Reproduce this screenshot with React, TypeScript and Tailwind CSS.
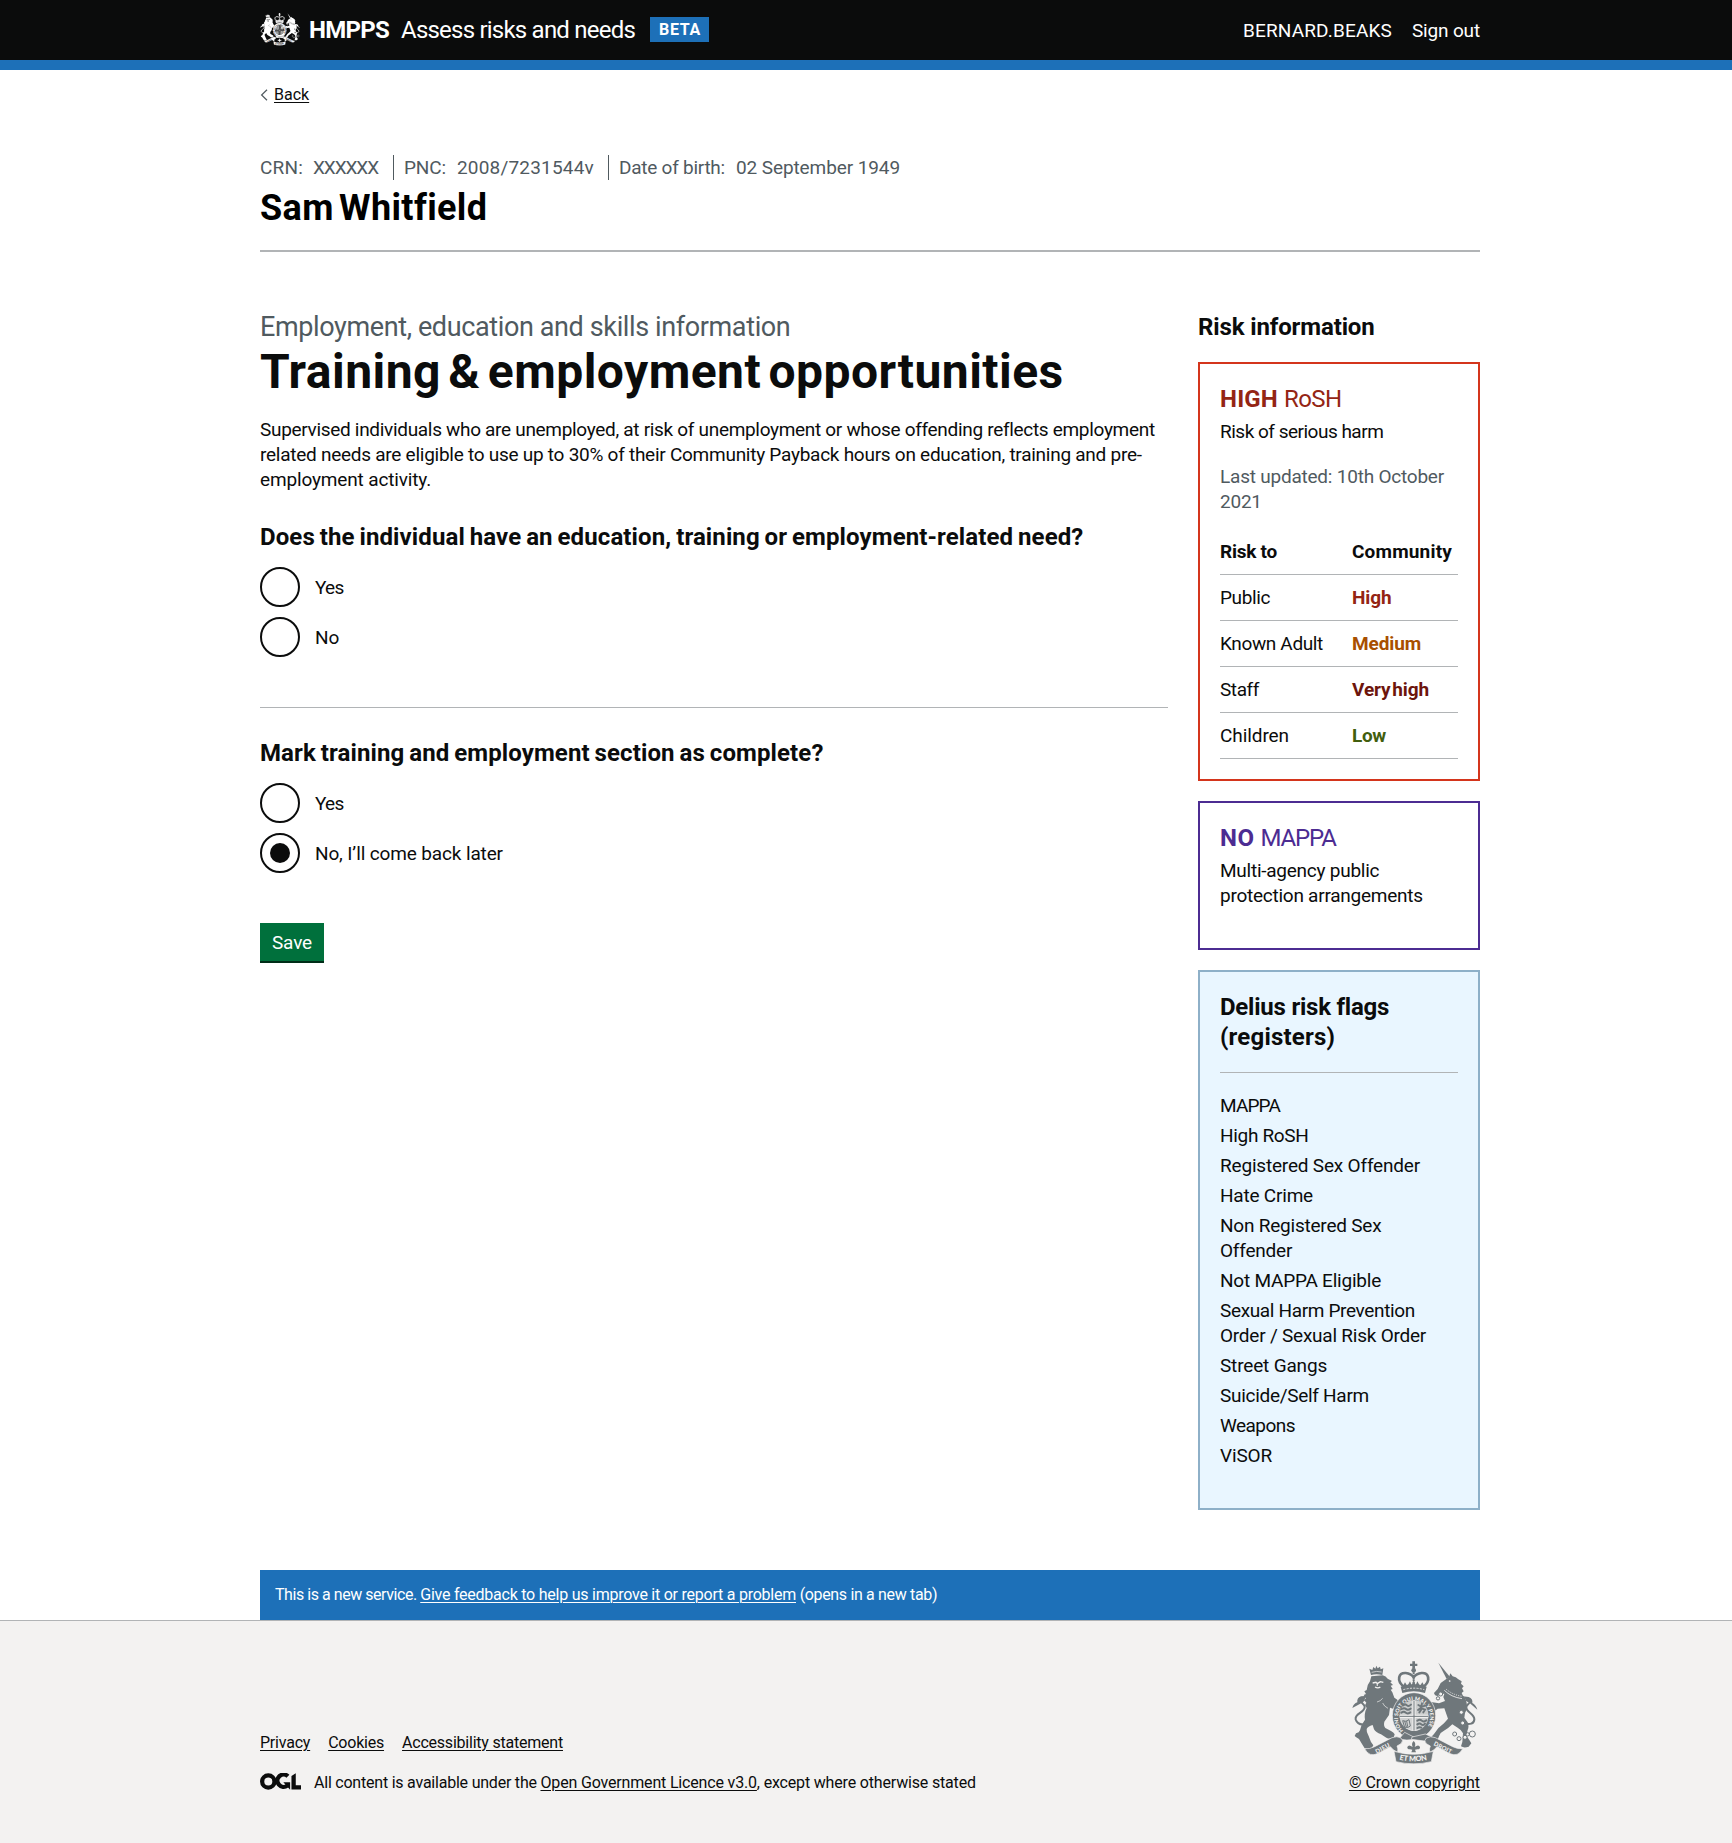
import type { ReactNode } from "react";

type CrestProps = { className: string; ink: string; paper: string; idPrefix: string };

/** Royal arms: lion, garter with crown, unicorn and the motto ribbon. */
function RoyalArms({ className, ink, paper, idPrefix }: CrestProps) {
  const ring = `${idPrefix}-garter`;
  const scroll = `${idPrefix}-scroll`;
  return (
    <svg viewBox="20 16 378 310" className={className} fill={ink} aria-hidden="true">
      {/* crown */}
      <path d="M201 19h8v7h7v7h-7v8h-8v-8h-7v-7h7z" />
      <circle cx="205" cy="46" r="7" />
      <path
        d="M176 96C152 76 160 53 181 54c12 1 20 7 24 13 4-6 12-12 24-13 21-1 29 22 5 42"
        fill="none"
        stroke={ink}
        strokeWidth="8"
      />
      <path d="M205 52v40" stroke={ink} strokeWidth="6" strokeDasharray="5 2" />
      <path d="M171 96l8-14 7 11 8-14 5 12 6-17 6 17 5-12 8 14 7-11 8 14q-34-11-68 0z" />
      <path d="M166 95q38-14 78 0l-5 19q-34-11-68 0z" />
      <path d="M174 104q31-9 63 0" fill="none" stroke={paper} strokeWidth="2.5" strokeDasharray="6 4" />

      {/* lion */}
      <path d="M77 60l-5-19 9 4 3-9 6 5 3-9 4 8 7-5 2 8 8-3-3 20q-18-5-34 0z" />
      <path d="M79 52q15-5 30-1" fill="none" stroke={paper} strokeWidth="2" />
      <path d="M78 64l34-3q10 3 15 10l13 7-5 4 8 8-7 2 6 10-6 2 5 8 6 16q9 4 14 12l-3 13-9-4-1 14-14-5-3 22-14 20q-3 12 3 19l17 9q8 4 11 10l-3 10q-12 5-22 0l-16-10q-16-6-21-15l-4-13q-15 4-18 12-1 10 5 19l8 20 7 10-5 9q-12 5-21 0l-8-13-9-15q-8-5-13-9l4-8q10-2 12-9 3-18 15-32-3-19 5-35l-5-8 4-8-7-8 6-5-7-10 7-3-5-8 7-4q2-17 10-26z" />
      <path d="M82 84l10-2 4 4 9-6 9 2M89 96q9 5 16 0M96 86v6" fill="none" stroke={paper} strokeWidth="4" />
      <path d="M112 130q-7 9-17 11M128 160q-12-6-16-16" fill="none" stroke={paper} strokeWidth="2" />
      <path
        d="M66 206q-28 8-35-13c-4-18 29-20 27-38-1-8-9-9-11-16"
        fill="none"
        stroke={ink}
        strokeWidth="6"
      />
      <path d="M49 144l-28 15q4-14 15-17-2-13 11-18l24-2q-15 5-13 15z" />

      {/* unicorn */}
      <path d="M279 23l35 43-10 6z" />
      <path d="M303 72l8-5 4-12 7 9q10 1 17 9l10 6-2 7 8 8-5 6 5 9-6 5 3 7q10 9 12 23 3 16-5 30l-2 14 10 14q5 13 0 23l-4 17 9 13 6 10-8 10q-14 5-23-1l4-13 2-26q-5-11-16-17l-16-10q-12 12-23 18l-12 8q-5 8-9 20l-12 2-8-9 9-10q11-19 30-32l12-14-11-31-20 1-14 11q-3 8 3 13l-8 6-10-9 2-13 14-14-11-2q-7 7-14 3l-3-10 9-9 12 4 24 4 18-7-5-12 3-10-10 1-10 6q-9 0-11-9l11-12 9-18z" />
      <path d="M297 106q20 20 53 25" fill="none" stroke={paper} strokeWidth="2.5" />
      <path d="M302 102q20 18 49 22" fill="none" stroke={paper} strokeWidth="3" strokeDasharray="3 4" />
      <circle cx="313" cy="78" r="2.6" fill={paper} />
      <path
        d="M352 205q34 8 35-12c0-18-25-20-24-37 1-8 9-10 12-16"
        fill="none"
        stroke={ink}
        strokeWidth="6"
      />
      <path d="M372 143l24 21q-5-15-15-20 2-13-11-18l-23-3q14 5 15 15z" />
      <g fill={paper} stroke={ink} strokeWidth="3">
        <circle cx="286" cy="117" r="6" />
        <circle cx="278" cy="130" r="5" />
        <circle cx="348" cy="172" r="6" />
        <circle cx="352" cy="204" r="6" />
        <circle cx="328" cy="237" r="6" />
        <circle cx="341" cy="251" r="6" />
        <circle cx="359" cy="247" r="6" />
        <circle cx="367" cy="238" r="5" />
        <circle cx="381" cy="237" r="9" />
      </g>

      {/* garter and shield */}
      <ellipse cx="206" cy="182" rx="65" ry="69" stroke={paper} strokeWidth="2" />
      <ellipse cx="206" cy="182" rx="43" ry="46" fill={paper} />
      <defs>
        <path id={ring} d="M174 227A48 52 0 1 1 238 227" />
        <path id={scroll} d="M162 314q43 10 86 0" />
      </defs>
      <text fill={paper} fontSize="16" fontWeight="900" fontFamily="Lato, sans-serif">
        <textPath href={`#${ring}`} textLength="226">
          HONI SOIT QUI MAL Y PENSE
        </textPath>
      </text>
      <path d="M166 153q6-10 16-14l20-3v43h-39z" opacity=".3" />
      <path d="M210 136q25 2 35 20l4 23h-39z" opacity=".3" />
      <path d="M163 188h39v38q-32-5-39-38z" opacity=".25" />
      <path d="M210 188h39q-4 33-39 38z" opacity=".3" />
      <g fill="none" stroke={ink} strokeWidth="6" strokeLinecap="round">
        <path d="M174 151q6-5 11 0t12-2M169 162q8-5 13 0t14-1M168 173q8-5 13 0t14-1" />
        <path d="M216 197q8-5 13 0t14-1M216 208q7-5 12 0t11-2M216 219q6-4 12-1" />
        <path d="M219 150l10 6 10-4M230 146l-4 13-8 6M227 160l12 4-5 8M222 172l5-7" />
      </g>
      <path
        d="M172 197l6 20q12 2 17-4l-4-19q-9 8-19 3zM178 198l5 18M184 198l3 17"
        fill="none"
        stroke={ink}
        strokeWidth="3"
      />
      <path d="M206 138v89M163 184h86" stroke={paper} strokeWidth="8" />
      <path d="M206 138v89M163 184h86" stroke={ink} strokeWidth="3" />
      <path d="M178 232l-17 20q22 6 48 1l-2-6z" stroke={paper} strokeWidth="2" />
      <path d="M200 246l40-9 22 10-18 12-46-6z" stroke={paper} strokeWidth="2" />

      {/* motto ribbon */}
      <path d="M58 281q14 2 30-6l52-27q15-6 27 1 9 8 0 17l-12 7q4 8 2 19-14-6-22-17l-36 20q-28 13-41-14z" stroke={paper} strokeWidth="2" />
      <path d="M352 281q-14 2-30-6l-52-27q-15-6-27 1-9 8 0 17l12 7q-4 8-2 19 14-6 22-17l36 20q28 13 41-14z" stroke={paper} strokeWidth="2" />
      <path d="M146 289q58 18 118 0l-6 31q-53 13-106 0z" stroke={paper} strokeWidth="2" />
      <g fill={paper} fontWeight="900" fontFamily="Lato, sans-serif">
        <text fontSize="18" transform="translate(94 296) rotate(-28)" textLength="46">
          DIEU
        </text>
        <text fontSize="18" transform="translate(264 270) rotate(27)" textLength="58">
          DROIT
        </text>
        <text fontSize="22">
          <textPath href={`#${scroll}`} textLength="84">
            ET MON
          </textPath>
        </text>
      </g>
      <path d="M205 258q8 8 3 18 12-9 16 0 1 7-8 7l-7 1 3 8h-14l3-8-7-1q-9 0-8-7 4-9 16 0-5-10 3-18z" />
    </svg>
  );
}

function OglLogo() {
  return (
    <svg viewBox="0 0 483.2 195.7" className="h-[17px] w-[41px] shrink-0" fill="none" stroke="#0b0c0c" strokeWidth="50" aria-hidden="true">
      <circle cx="97.8" cy="97.8" r="72.5" />
      <path d="M329 36A72.5 72.5 0 1 0 322 146" />
      <path d="M275 107H355V196L275 107Z" fill="#0b0c0c" stroke="none" />
      <path d="M370.8 32.3L421.5 0V142.8H483.2V193.5H370.8Z" fill="#0b0c0c" stroke="none" />
    </svg>
  );
}

function Radio({ checked = false, children }: { checked?: boolean; children: ReactNode }) {
  return (
    <label className="flex h-10 items-center gap-[15px]">
      <span className="flex size-10 items-center justify-center rounded-full border-2 border-[#0b0c0c] bg-white">
        {checked && <span className="size-5 rounded-full bg-[#0b0c0c]" />}
      </span>
      {children}
    </label>
  );
}

const risks = [
  { who: <span className="tracking-[-0.39px]">Public</span>, level: <span className="tracking-[-0.11px] text-[#942514]">High</span> },
  { who: <span className="tracking-[-0.36px]">Known Adult</span>, level: <span className="tracking-[-0.12px] text-[#a84f00]">Medium</span> },
  { who: <span className="tracking-[-0.41px]">Staff</span>, level: <span className="tracking-[-0.1px] [word-spacing:-3px] text-[#6d150c]">Very high</span> },
  { who: <span className="tracking-[-0.08px]">Children</span>, level: <span className="tracking-[-0.32px] text-[#425e0e]">Low</span> },
];

const flags = [
  <span className="tracking-[-0.85px]">MAPPA</span>,
  <span className="tracking-[-0.32px]">High RoSH</span>,
  <span className="tracking-[-0.19px]">Registered Sex Offender</span>,
  <span className="tracking-[-0.21px]">Hate Crime</span>,
  <span className="tracking-[-0.22px]">
    Non Registered Sex
    <br />
    Offender
  </span>,
  <span className="tracking-[-0.22px]">Not MAPPA Eligible</span>,
  <span>
    <span className="tracking-[-0.35px]">Sexual Harm Prevention</span>
    <br />
    <span className="tracking-[-0.23px]">Order / Sexual Risk Order</span>
  </span>,
  <span className="tracking-[-0.17px]">Street Gangs</span>,
  <span className="tracking-[-0.29px]">Suicide/Self Harm</span>,
  <span className="tracking-[-0.54px]">Weapons</span>,
  <span className="tracking-[-0.16px]">ViSOR</span>,
];

const link = "underline decoration-1 underline-offset-[1.6px]";

export default function App() {
  return (
    <div className="min-h-[1843px] bg-white font-['Roboto',sans-serif] text-[19px] leading-[25px] text-[#0b0c0c]">
      <header className="h-[70px] border-b-[10px] border-[#1d70b8] bg-[#0b0c0c] pl-2 text-white">
        <div className="mx-auto flex h-[60px] w-[1220px] items-center justify-between">
          <div className="flex items-center">
            <RoyalArms className="-mt-[2px] h-[34px] w-10" ink="#ffffff" paper="#0b0c0c" idPrefix="top" />
            <span className="ml-[9px] w-[92px] text-2xl leading-[30px] font-bold tracking-[-0.73px]">HMPPS</span>
            <span className="w-[249px] text-2xl leading-[30px] tracking-[-0.78px] whitespace-nowrap">Assess risks and needs</span>
            <span className="-mt-px flex h-[25px] w-[59px] items-center justify-center bg-[#1d70b8] pl-px text-base leading-5 font-bold tracking-[0.7px]">
              BETA
            </span>
          </div>
          <div className="flex gap-5 pt-px">
            <span className="tracking-[0.16px]">BERNARD.BEAKS</span>
            <span className="tracking-[-0.16px]">Sign out</span>
          </div>
        </div>
      </header>

      <div className="pl-2">
        <div className="mx-auto w-[1220px]">
          <div className="flex items-center pt-[15px] text-base leading-5">
            <svg viewBox="0 0 8 12" className="mr-[6px] h-3 w-2" fill="none" stroke="#505a5f" strokeWidth="1.2" aria-hidden="true">
              <path d="M7 .7L1.6 6L7 11.3" />
            </svg>
            <span className={link}>Back</span>
          </div>

          <div className="mt-[50px] h-[97px] border-b-2 border-[#b1b4b6]">
            <div className="flex text-[#505a5f]">
              <div className="flex w-[134px] border-r border-[#505a5f]">
                <span className="w-[53px] tracking-[0.19px]">CRN:</span>
                <span className="tracking-[-1.08px]">XXXXXX</span>
              </div>
              <div className="flex w-[215px] border-r border-[#505a5f] pl-[10px]">
                <span className="w-[53px] tracking-[-0.13px]">PNC:</span>
                <span className="tracking-[0.19px]">2008/7231544v</span>
              </div>
              <div className="flex pl-[10px]">
                <span className="w-[117px] tracking-[-0.25px]">Date of birth:</span>
                <span className="tracking-[-0.1px]">02 September 1949</span>
              </div>
            </div>
            <p className="mt-[8px] text-4xl leading-10 font-bold tracking-[0.37px] text-black [word-spacing:-4px]">Sam Whitfield</p>
          </div>

          <div className="flex justify-between pt-[60px]">
            <main className="w-[908px]">
              <p className="text-[27px] leading-[30px] tracking-[-0.38px] text-[#505a5f]">Employment, education and skills information</p>
              <h1 className="mt-[5px] text-5xl leading-[50px] font-bold tracking-[0.46px] [word-spacing:-5px]">
                Training &amp; employment opportunities
              </h1>
              <p className="mt-5 whitespace-nowrap">
                <span className="tracking-[-0.31px]">
                  Supervised individuals who are unemployed, at risk of unemployment or whose offending reflects employment
                </span>
                <br />
                <span className="tracking-[-0.26px]">
                  related needs are eligible to use up to 30% of their Community Payback hours on education, training and pre-
                </span>
                <br />
                <span className="tracking-[-0.15px]">employment activity.</span>
              </p>

              <h2 className="mt-[30px] text-2xl leading-[30px] font-bold tracking-[0.11px] [word-spacing:-1.2px]">
                Does the individual have an education, training or employment-related need?
              </h2>
              <div className="mt-[15px] flex flex-col gap-[10px]">
                <Radio>
                  <span className="tracking-[-0.7px]">Yes</span>
                </Radio>
                <Radio>
                  <span>No</span>
                </Radio>
              </div>

              <hr className="mt-[50px] border-t border-[#b1b4b6]" />

              <h2 className="mt-[30px] text-2xl leading-[30px] font-bold tracking-[0.11px] [word-spacing:-1.2px]">
                Mark training and employment section as complete?
              </h2>
              <div className="mt-[15px] flex flex-col gap-[10px]">
                <Radio>
                  <span className="tracking-[-0.7px]">Yes</span>
                </Radio>
                <Radio checked>
                  <span className="tracking-[-0.14px]">No, I’ll come back later</span>
                </Radio>
              </div>

              <button className="mt-[50px] flex h-10 w-16 items-center justify-center border-b-2 border-[#002d18] bg-[#00703c] tracking-[-0.16px] text-white">
                Save
              </button>
            </main>

            <aside className="w-[282px]">
              <h2 className="text-2xl leading-[30px] font-bold tracking-[-0.13px]">Risk information</h2>

              <section className="mt-5 border-2 border-[#d4351c] p-5">
                <h3 className="flex gap-[6px] text-2xl leading-[30px] text-[#942514]">
                  <strong className="tracking-[0.18px]">HIGH</strong>
                  <span className="tracking-[-0.6px]">RoSH</span>
                </h3>
                <p className="mt-[5px] tracking-[-0.5px]">Risk of serious harm</p>
                <p className="mt-5 tracking-[-0.22px] text-[#505a5f]">
                  Last updated: 10th October
                  <br />
                  2021
                </p>
                <div className="mt-[15px]">
                  <div className="flex h-[46px] border-b border-[#b1b4b6] pt-[10px] font-bold">
                    <span className="w-[132px] tracking-[-0.25px]">Risk to</span>
                    <span className="tracking-[0.18px]">Community</span>
                  </div>
                  {risks.map((r, i) => (
                    <div key={i} className="flex h-[46px] border-b border-[#b1b4b6] pt-[10px]">
                      <div className="w-[132px]">{r.who}</div>
                      <div className="font-bold">{r.level}</div>
                    </div>
                  ))}
                </div>
              </section>

              <section className="mt-5 border-2 border-[#4c2c92] p-5 pb-10">
                <h3 className="flex gap-[6px] text-2xl leading-[30px] text-[#4c2c92]">
                  <strong className="tracking-[0.5px]">NO</strong>
                  <span className="tracking-[-1.15px]">MAPPA</span>
                </h3>
                <p className="mt-[5px] tracking-[-0.25px]">
                  Multi-agency public
                  <br />
                  protection arrangements
                </p>
              </section>

              <section className="mt-5 border-2 border-[#8eb0c8] bg-[#e9f6ff] p-5">
                <h3 className="border-b border-[#b1b4b6] pb-5 text-2xl leading-[30px] font-bold">
                  <span className="tracking-[-0.23px]">Delius risk flags</span>
                  <br />
                  <span className="tracking-[0.19px]">(registers)</span>
                </h3>
                <ul className="mt-5 mb-5 flex flex-col gap-[5px]">
                  {flags.map((f, i) => (
                    <li key={i}>{f}</li>
                  ))}
                </ul>
              </section>
            </aside>
          </div>

          <div className="mt-[60px] h-[50px] bg-[#1d70b8] px-[15px] pt-[15px] text-base leading-5 text-white">
            <span className="tracking-[-0.45px]">This is a new service. </span>
            <span className={`${link} tracking-[-0.24px]`}>Give feedback to help us improve it or report a problem</span>
            <span className="tracking-[-0.34px]"> (opens in a new tab)</span>
          </div>
        </div>
      </div>

      <footer className="h-[223px] border-t border-[#b1b4b6] bg-[#f3f2f1] pl-2 text-base leading-5">
        <div className="mx-auto flex w-[1220px] items-end justify-between pt-[39px]">
          <div>
            <div className="flex tracking-[-0.22px]">
              <span className={`${link} mr-[18px]`}>Privacy</span>
              <span className={`${link} mr-[18px]`}>Cookies</span>
              <span className={link}>Accessibility statement</span>
            </div>
            <div className="mt-5 flex">
              <OglLogo />
              <p className="ml-[13px]">
                <span className="tracking-[-0.22px]">All content is available under the </span>
                <span className={`${link} tracking-[-0.17px]`}>Open Government Licence v3.0</span>
                <span className="tracking-[-0.17px]">, except where otherwise stated</span>
              </p>
            </div>
          </div>
          <div className="flex flex-col items-center">
            <RoyalArms className="h-[104px] w-[126px]" ink="#6f777b" paper="#f3f2f1" idPrefix="foot" />
            <span className={`${link} mt-[9px] tracking-[-0.09px]`}>© Crown copyright</span>
          </div>
        </div>
      </footer>
    </div>
  );
}
